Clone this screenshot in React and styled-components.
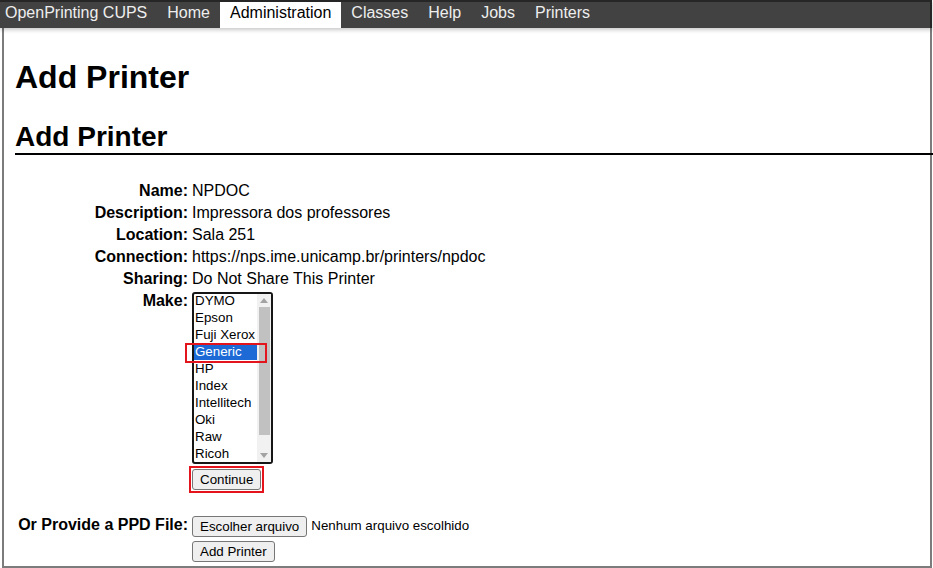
import styled, { createGlobalStyle } from "styled-components";

const Global = createGlobalStyle`
  html, body {
    margin: 0;
    padding: 0;
    background: #fff;
    font-family: "Liberation Sans", Arial, sans-serif;
    color: #000;
  }
`;

const Page = styled.div`
  width: 933px;
  height: 568px;
  display: flex;
  flex-direction: column;
`;

const Nav = styled.nav`
  display: flex;
  width: 932px;
  box-sizing: border-box;
  background: #424242;
  border-top: 2px solid #262626;
  border-right: 2px solid #262626;
  box-shadow: 0 2px 4px rgba(0, 0, 0, 0.22);
  position: relative;
  z-index: 1;
`;

const NavItem = styled.a`
  display: block;
  font-size: 16px;
  line-height: 22px;
  padding: 0 10px 4px;
  padding-left: ${(p) => (p.$brand ? "5px" : "10px")};
  color: ${(p) => (p.$active ? "#000" : "#eeeeee")};
  background: ${(p) => (p.$active ? "#fff" : "transparent")};
  text-decoration: none;
`;

const Main = styled.main`
  flex: 1;
  margin-left: 2px;
  width: 930px;
  box-sizing: border-box;
  border: 2px solid #7c7c7c;
  border-top: none;
  padding-left: 11px;
`;

const Title = styled.h1`
  margin: 30px 0 0;
  font-size: 32px;
  line-height: 38px;
  font-weight: bold;
`;

const Section = styled.h2`
  margin: 24px -5px 0 0;
  font-size: 28px;
  line-height: 33px;
  font-weight: bold;
  border-bottom: 2px solid #000;
`;

const Form = styled.div`
  display: grid;
  grid-template-columns: 173px auto;
  column-gap: 4px;
  margin-top: 25px;
  font-size: 16px;
  line-height: 22px;
`;

const Label = styled.div`
  text-align: right;
  font-weight: bold;
  padding-top: ${(p) => (p.$spaced ? "24px" : "0")};
`;

const Value = styled.div`
  padding-top: ${(p) => (p.$spaced ? "24px" : "0")};
  display: flex;
  flex-direction: column;
  align-items: flex-start;
`;

const ListBox = styled.div`
  display: flex;
  width: 81px;
  height: 172px;
  margin-top: 2px;
  box-sizing: border-box;
  border: 2px solid #161616;
  border-radius: 3px;
  background: #fff;
`;

const Options = styled.div`
  width: 63px;
  font-size: 13.33px;
`;

const Option = styled.div`
  position: relative;
  height: 17px;
  line-height: 17px;
  padding-left: 1px;
  white-space: nowrap;
  &:first-child {
    margin-top: -2px;
  }
  background: ${(p) => (p.$selected ? "#1d69d6" : "transparent")};
  color: ${(p) => (p.$selected ? "#fff" : "#000")};
  ${(p) =>
    p.$selected &&
    `&::after {
      content: "";
      position: absolute;
      top: 0;
      bottom: -3px;
      left: -9px;
      right: -10px;
      border: 2px solid #e3141c;
      z-index: 2;
    }`}
`;

const Scrollbar = styled.div`
  width: 14px;
  background: #f1f1f1;
  display: flex;
  flex-direction: column;
  align-items: center;
`;

const Arrow = styled.div`
  height: 13px;
  width: 14px;
  display: flex;
  align-items: center;
  justify-content: center;
`;

const Thumb = styled.div`
  width: 11px;
  height: 128px;
  background: #c1c1c1;
`;

const Spacer = styled.div`
  flex: 1;
`;

const Button = styled.button`
  position: relative;
  font-family: "Liberation Sans", Arial, sans-serif;
  font-size: 13.33px;
  line-height: 15px;
  height: 21px;
  padding: 1px 7px;
  margin-top: ${(p) => p.$top || 0}px;
  border: 1px solid #767676;
  border-radius: 3px;
  background: #efefef;
  color: #000;
  ${(p) =>
    p.$marked &&
    `&::after {
      content: "";
      position: absolute;
      top: -4px;
      bottom: -4px;
      left: -4px;
      right: -4px;
      border: 2px solid #e3141c;
    }`}
`;

const FileRow = styled.div`
  display: flex;
  align-items: center;
  gap: 4px;
  margin-top: 1px;
  font-size: 13.33px;
`;

const makes = ["DYMO", "Epson", "Fuji Xerox", "Generic", "HP", "Index", "Intellitech", "Oki", "Raw", "Ricoh"];

const fields = [
  ["Name:", "NPDOC"],
  ["Description:", "Impressora dos professores"],
  ["Location:", "Sala 251"],
  ["Connection:", "https://nps.ime.unicamp.br/printers/npdoc"],
  ["Sharing:", "Do Not Share This Printer"],
];

function Tri({ down }) {
  return (
    <svg width="8" height="5" viewBox="0 0 8 5">
      <path d={down ? "M0 0H8L4 5Z" : "M0 5H8L4 0Z"} fill="#a3a3a3" />
    </svg>
  );
}

export default function App() {
  return (
    <Page>
      <Global />
      <Nav>
        <NavItem $brand>OpenPrinting CUPS</NavItem>
        <NavItem>Home</NavItem>
        <NavItem $active>Administration</NavItem>
        <NavItem>Classes</NavItem>
        <NavItem>Help</NavItem>
        <NavItem>Jobs</NavItem>
        <NavItem>Printers</NavItem>
      </Nav>
      <Main>
        <Title>Add Printer</Title>
        <Section>Add Printer</Section>
        <Form>
          {fields.map(([l, v]) => (
            <>
              <Label key={l}>{l}</Label>
              <Value key={l + "v"}>{v}</Value>
            </>
          ))}
          <Label>Make:</Label>
          <Value>
            <ListBox>
              <Options>
                {makes.map((m) => (
                  <Option key={m} $selected={m === "Generic"}>
                    {m}
                  </Option>
                ))}
              </Options>
              <Scrollbar>
                <Arrow>
                  <Tri />
                </Arrow>
                <Thumb />
                <Spacer />
                <Arrow>
                  <Tri down />
                </Arrow>
              </Scrollbar>
            </ListBox>
            <Button $top={5} $marked>
              Continue
            </Button>
          </Value>
          <Label $spaced>Or Provide a PPD File:</Label>
          <Value $spaced>
            <FileRow>
              <Button>Escolher arquivo</Button>
              <span>Nenhum arquivo escolhido</span>
            </FileRow>
            <Button $top={4}>Add Printer</Button>
          </Value>
        </Form>
      </Main>
    </Page>
  );
}
